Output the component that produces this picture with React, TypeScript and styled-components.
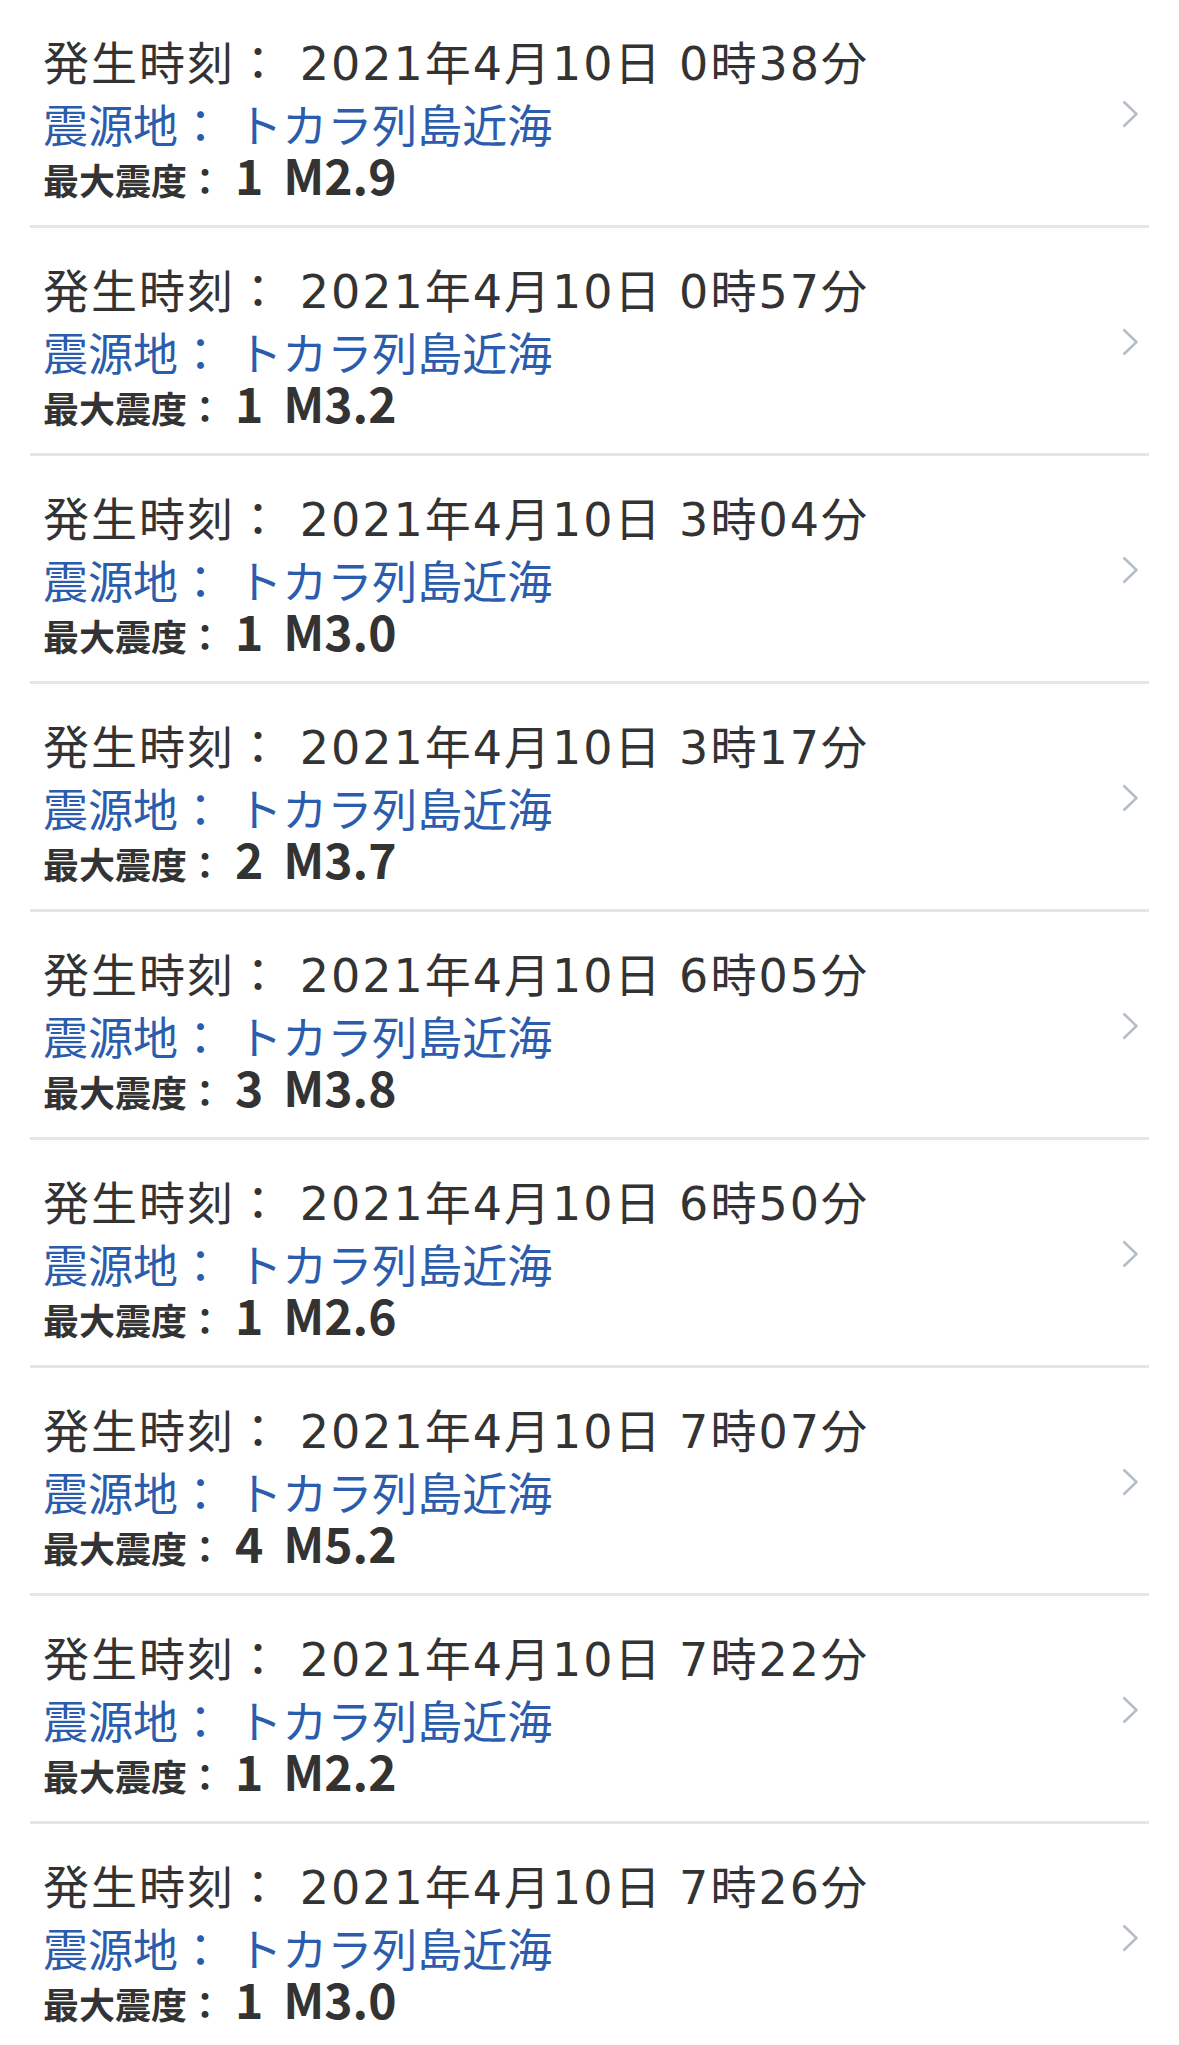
import styled, { createGlobalStyle } from "styled-components";

const GlobalStyle = createGlobalStyle`
  html, body {
    margin: 0;
    padding: 0;
    background: #ffffff;
  }
`;

const quakes = [
  { time: "2021年4月10日 0時38分", place: "トカラ列島近海", shindo: "1", mag: "M2.9" },
  { time: "2021年4月10日 0時57分", place: "トカラ列島近海", shindo: "1", mag: "M3.2" },
  { time: "2021年4月10日 3時04分", place: "トカラ列島近海", shindo: "1", mag: "M3.0" },
  { time: "2021年4月10日 3時17分", place: "トカラ列島近海", shindo: "2", mag: "M3.7" },
  { time: "2021年4月10日 6時05分", place: "トカラ列島近海", shindo: "3", mag: "M3.8" },
  { time: "2021年4月10日 6時50分", place: "トカラ列島近海", shindo: "1", mag: "M2.6" },
  { time: "2021年4月10日 7時07分", place: "トカラ列島近海", shindo: "4", mag: "M5.2" },
  { time: "2021年4月10日 7時22分", place: "トカラ列島近海", shindo: "1", mag: "M2.2" },
  { time: "2021年4月10日 7時26分", place: "トカラ列島近海", shindo: "1", mag: "M3.0" },
];

const List = styled.ul`
  list-style: none;
  margin: 0;
  padding: 0 30px;
`;

const Row = styled.li`
  display: flex;
  align-items: center;
  padding: 32px 11px 28px 13px;
  border-bottom: 3px solid #e5e5e5;
`;

const Info = styled.div`
  flex: 1;
  min-width: 0;
`;

const TimeLine = styled.div`
  font-family: "DejaVu Sans", "Noto Sans CJK JP", sans-serif;
  font-size: 46px;
  line-height: 64px;
  letter-spacing: 2px;
  color: #333333;
  white-space: nowrap;
`;

const PlaceLine = styled.div`
  font-family: "DejaVu Sans", "Noto Sans CJK JP", sans-serif;
  font-size: 45px;
  line-height: 64px;
  color: #2b5cad;
  white-space: nowrap;
`;

const ShindoLine = styled.div`
  height: 37px;
  font-family: "Noto Sans CJK JP", sans-serif;
  font-size: 36px;
  line-height: 36px;
  font-weight: 700;
  color: #333333;
  white-space: nowrap;
`;

const Big = styled.span<{ $gap: number }>`
  display: inline-block;
  font-size: 48px;
  line-height: 28px;
  font-weight: 700;
  margin-left: ${(p) => p.$gap}px;
`;

const Chevron = styled.svg`
  flex: none;
  width: 16px;
  height: 28px;
  margin-top: -2px;
`;

const App = () => {
  return (
    <>
      <GlobalStyle />
      <List>
        {quakes.map((q, i) => (
          <Row key={`quake-${i}`}>
            <Info>
              <TimeLine>発生時刻： {q.time}</TimeLine>
              <PlaceLine>震源地： {q.place}</PlaceLine>
              <ShindoLine>
                最大震度：
                <Big $gap={12}>{q.shindo}</Big>
                <Big $gap={20}>{q.mag}</Big>
              </ShindoLine>
            </Info>
            <Chevron viewBox="0 0 16 28">
              <polyline
                points="1.5,1.5 14.5,14 1.5,26.5"
                fill="none"
                stroke="#b5bec8"
                strokeWidth="2.6"
              />
            </Chevron>
          </Row>
        ))}
      </List>
    </>
  );
};

export default App;
